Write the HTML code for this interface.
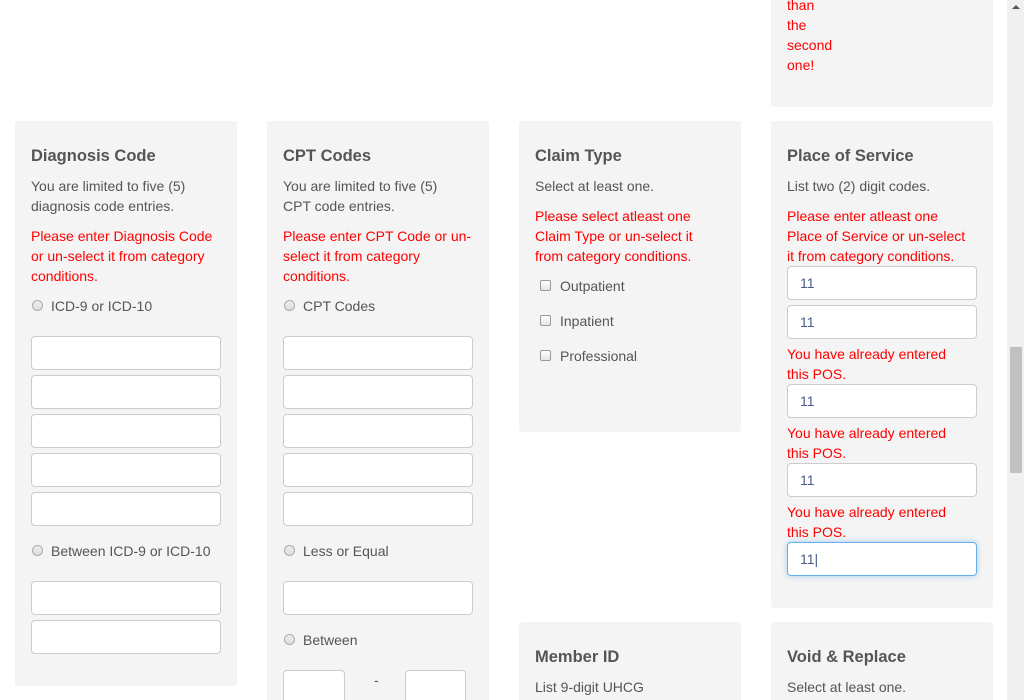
<!DOCTYPE html>
<html style="overflow:hidden;height:700px"><head><style>
body{margin:0;width:1024px;height:700px;overflow:hidden;background:#fff;font-family:"Liberation Sans",sans-serif;font-size:14px;color:#555;position:relative}
.p{position:absolute;background:#f4f4f4;border-radius:3px}
.a{position:absolute;line-height:20px;white-space:nowrap}
h3{position:absolute;margin:0;font-size:16.5px;font-weight:bold;color:#555;line-height:20px;top:0}
.e{color:#f00}
.i{position:absolute;background:#fff;border:1px solid #ccc;border-radius:4px;box-sizing:border-box;height:34px;font-size:14px;color:#4a5a8a;padding-left:12px;line-height:32px}
.r{position:absolute;width:11px;height:11px;border-radius:50%;border:1px solid #aaa;background:linear-gradient(#eee,#ddd);box-sizing:border-box}
.c{position:absolute;width:11px;height:11px;border:1px solid #999;border-radius:2px;background:linear-gradient(#fff,#e5e5e5);box-sizing:border-box}
</style></head><body>
<div class="p" style="left:771px;top:-10px;width:222px;height:117px"></div>
<div class="a e" style="left:787px;top:-5px">than<br>the<br>second<br>one!</div>

<div class="p" style="left:15px;top:121px;width:222px;height:565px"></div>
<h3 style="left:31px;top:146px">Diagnosis Code</h3>
<div class="a" style="left:31px;top:176px">You are limited to five (5)<br>diagnosis code entries.</div>
<div class="a e" style="left:31px;top:226px">Please enter Diagnosis Code<br>or un-select it from category<br>conditions.</div>
<div class="r" style="left:32px;top:300px"></div><div class="a" style="left:51px;top:296px">ICD-9 or ICD-10</div>
<div class="i" style="left:31px;top:336px;width:190px"></div>
<div class="i" style="left:31px;top:375px;width:190px"></div>
<div class="i" style="left:31px;top:414px;width:190px"></div>
<div class="i" style="left:31px;top:453px;width:190px"></div>
<div class="i" style="left:31px;top:492px;width:190px"></div>
<div class="r" style="left:32px;top:545px"></div><div class="a" style="left:51px;top:541px">Between ICD-9 or ICD-10</div>
<div class="i" style="left:31px;top:581px;width:190px"></div>
<div class="i" style="left:31px;top:620px;width:190px"></div>

<div class="p" style="left:267px;top:121px;width:222px;height:579px;border-radius:3px 3px 0 0"></div>
<h3 style="left:283px;top:146px">CPT Codes</h3>
<div class="a" style="left:283px;top:176px">You are limited to five (5)<br>CPT code entries.</div>
<div class="a e" style="left:283px;top:226px">Please enter CPT Code or un-<br>select it from category<br>conditions.</div>
<div class="r" style="left:284px;top:300px"></div><div class="a" style="left:303px;top:296px">CPT Codes</div>
<div class="i" style="left:283px;top:336px;width:190px"></div>
<div class="i" style="left:283px;top:375px;width:190px"></div>
<div class="i" style="left:283px;top:414px;width:190px"></div>
<div class="i" style="left:283px;top:453px;width:190px"></div>
<div class="i" style="left:283px;top:492px;width:190px"></div>
<div class="r" style="left:284px;top:545px"></div><div class="a" style="left:303px;top:541px">Less or Equal</div>
<div class="i" style="left:283px;top:581px;width:190px"></div>
<div class="r" style="left:284px;top:634px"></div><div class="a" style="left:303px;top:630px">Between</div>
<div class="i" style="left:283px;top:670px;width:62px;height:30px;border-bottom:none;border-radius:4px 4px 0 0"></div>
<div class="a" style="left:374px;top:670px">-</div>
<div class="i" style="left:405px;top:670px;width:61px;height:30px;border-bottom:none;border-radius:4px 4px 0 0"></div>

<div class="p" style="left:519px;top:121px;width:222px;height:311px"></div>
<h3 style="left:535px;top:146px">Claim Type</h3>
<div class="a" style="left:535px;top:176px">Select at least one.</div>
<div class="a e" style="left:535px;top:206px">Please select atleast one<br>Claim Type or un-select it<br>from category conditions.</div>
<div class="c" style="left:540px;top:280px"></div><div class="a" style="left:560px;top:276px">Outpatient</div>
<div class="c" style="left:540px;top:315px"></div><div class="a" style="left:560px;top:311px">Inpatient</div>
<div class="c" style="left:540px;top:350px"></div><div class="a" style="left:560px;top:346px">Professional</div>

<div class="p" style="left:519px;top:622px;width:222px;height:78px;border-radius:3px 3px 0 0"></div>
<h3 style="left:535px;top:647px">Member ID</h3>
<div class="a" style="left:535px;top:677px">List 9-digit UHCG</div>

<div class="p" style="left:771px;top:121px;width:222px;height:487px"></div>
<h3 style="left:787px;top:146px">Place of Service</h3>
<div class="a" style="left:787px;top:176px">List two (2) digit codes.</div>
<div class="a e" style="left:787px;top:206px">Please enter atleast one<br>Place of Service or un-select<br>it from category conditions.</div>
<div class="i" style="left:787px;top:266px;width:190px">11</div>
<div class="i" style="left:787px;top:305px;width:190px">11</div>
<div class="a e" style="left:787px;top:344px">You have already entered<br>this POS.</div>
<div class="i" style="left:787px;top:384px;width:190px">11</div>
<div class="a e" style="left:787px;top:423px">You have already entered<br>this POS.</div>
<div class="i" style="left:787px;top:463px;width:190px">11</div>
<div class="a e" style="left:787px;top:502px">You have already entered<br>this POS.</div>
<div class="i" style="left:787px;top:542px;width:190px;border-color:#66afe9;box-shadow:0 0 6px rgba(102,175,233,.6)">11|</div>

<div class="p" style="left:771px;top:622px;width:222px;height:78px;border-radius:3px 3px 0 0"></div>
<h3 style="left:787px;top:647px">Void &amp; Replace</h3>
<div class="a" style="left:787px;top:677px">Select at least one.</div>

<div style="position:absolute;left:1007px;top:0;width:17px;height:700px;background:#f0f0f0"></div>
<div style="position:absolute;left:1012px;top:5px;width:0;height:0;border-left:4px solid transparent;border-right:4px solid transparent;border-bottom:4px solid #555"></div>
<div style="position:absolute;left:1010px;top:347px;width:12px;height:126px;background:#c1c1c1"></div>
</body></html>
